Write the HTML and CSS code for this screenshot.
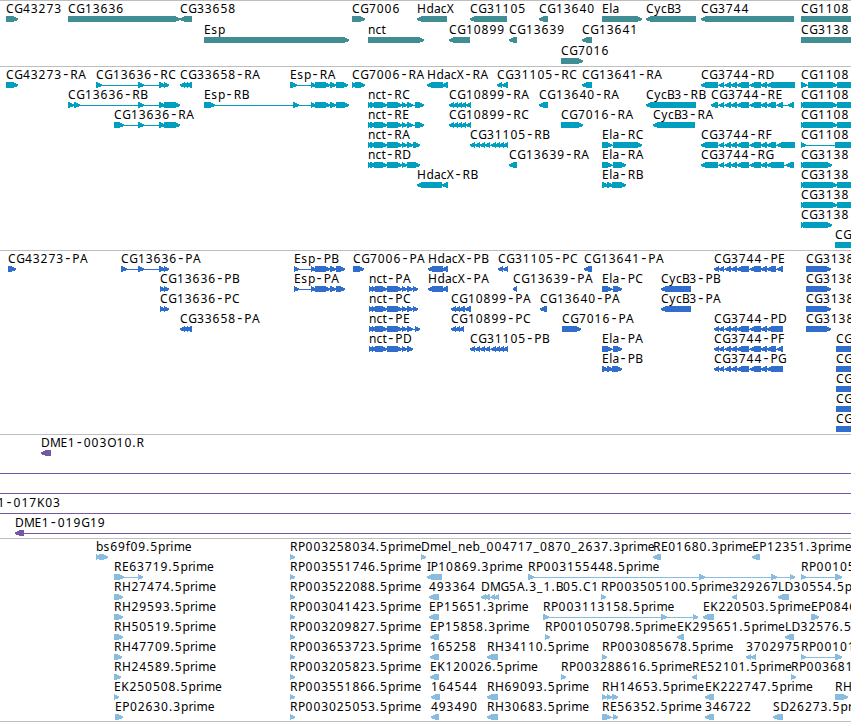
FILE: index.html
```html
<!DOCTYPE html>
<html lang="en">
<head>
  <meta charset="UTF-8" />
  <meta name="viewport" content="width=device-width, initial-scale=1.0"/>
  <title>Genome browser</title>
  <link rel="stylesheet" href="styles.css">
</head>
<body>

<main class="browser">
  <svg id="genes" class="track track-genes"></svg>
  <svg id="transcripts" class="track track-transcripts"></svg>
  <svg id="proteins" class="track track-proteins"></svg>
  <svg id="clones" class="track track-clones"></svg>
  <svg id="ests" class="track track-ests"></svg>
</main>

<script src="tracks.js"></script>
</body>
</html>
```
FILE: styles.css
```css
html, body {
  margin: 0;
  padding: 0;
  overflow: hidden;
  background: #fff;
}
.browser {
  display: flex;
  flex-direction: column;
  height: 721px;
  border-bottom: 1px solid #bebebe;
}
.track {
  display: block;
  flex: none;
  box-sizing: border-box;
  width: 100%;
  border-top: 1px solid #bebebe;
  overflow: hidden;
}
.track-genes {
  height: 66px;
  color: #408d93;
}
.track-transcripts {
  height: 184px;
  color: #009ebf;
}
.track-proteins {
  height: 184px;
  color: #316dcd;
}
.track-clones {
  height: 104px;
  color: #7457a5;
}
.track-ests {
  height: 183px;
  color: #88bddf;
}
.label {
  font-family: "Noto Sans", "Open Sans", sans-serif;
  font-size: 12px;
  fill: #000;
}
.dash {
  font-family: "DejaVu Sans", sans-serif;
  font-size: 14px;
}
.exon, .intron {
  fill: currentColor;
  shape-rendering: crispEdges;
}
```
FILE: tracks.js
```javascript
const SVG = 'http://www.w3.org/2000/svg';

// horizontal advance of each character in a label
const advance = {
  A: 8, B: 7.4, C: 8.3, D: 9, E: 7.3, F: 7, G: 8.7, H: 9.5, I: 3.7, K: 8.2, L: 6.6,
  M: 10.4, O: 9.4, P: 7.6, R: 8, S: 7.3, X: 7.6, '-': 8.3, '.': 4.3, _: 6.6,
  a: 6.8, b: 7.6, c: 6, d: 7.4, e: 7, f: 4.6, i: 3.4, l: 3.3, m: 11.1, n: 7.4,
  p: 7.5, r: 4.7, s: 6.6, t: 4.6, y: 6.6
};

// exon groups shared by several isoforms
const nct = '368-371 370-376 374-387 387-402 402-407 407-413';
const nctP = '369-373 372-376 375-387 387-402 402-407 407-413';
const esp = '311-316 315-330 330-336';
const cg3744 = '719-724 725-731 731-737 737-749 750-761 761-767';
const cg10899 = '449-454 453-458 457-462 461-466 466-471';
const cg31105 = '470-475 475-480 480-485 485-490 491-496 495-500 499-504 503-508';
const cg33658 = '180-185 183-188 186-192';

// each row: label | direction | exons | optional label position
const tracks = {
  genes: [
    ['CG43273|>|6-18', 'CG13636|>|68-180', 'CG33658|<|180-192', 'CG7006|>|352-365', 'HdacX|<|417-447',
     'CG31105|<|470-507', 'CG13640|<|539-548', 'Ela|>|602-642', 'CycB3|<|646-696', 'CG3744|<|701-794', 'CG1108|>|801-860'],
    ['Esp|>|204-349', 'nct|>|368-424', 'CG10899|<|449-470', 'CG13639|<|509-517', 'CG13641|<|582-592', 'CG3138|>|801-860'],
    ['CG7016|>|561-583']
  ],
  transcripts: [
    ['CG43273-RA|>|6-18', 'CG13636-RC|>|96-102 138-144 159-165 164-169', `CG33658-RA|<|${cg33658}`,
     `Esp-RA|>|290-297 ${esp} 336-348`, 'CG7006-RA|>|352-356 355-365', 'HdacX-RA|<|427-443 442-448',
     'CG31105-RC|<|497-502 502-508', 'CG13641-RA|<|582-592', `CG3744-RD|<|701-718 ${cg3744} 767-795`, 'CG1108|>|801-807 808-837 837-860'],
    ['CG13636-RB|>|68-74 74-80 138-144 159-165 164-180', `Esp-RB|>|204-215 293-299 ${esp} 336-349`, `nct-RC|>|${nct} 415-424`,
     `CG10899-RA|<|${cg10899}`, 'CG13640-RA|<|539-548', 'CycB3-RB|<|646-696',
     `CG3744-RE|<|711-718 ${cg3744} 767-776 777-783 788-794`, 'CG1108|>|801-804 803-837 837-860'],
    ['CG13636-RA|>|114-124 138-144 159-165 164-180', `nct-RE|>|${nct} 415-424`, `CG10899-RC|<|${cg10899}`,
     'CG7016-RA|>|561-583', 'CycB3-RA|<|653-695', 'CG1108|>|801-804 803-837 837-860'],
    [`nct-RA|>|${nct} 413-420`, `CG31105-RB|<|${cg31105}`, 'Ela-RC|>|602-612 613-642',
     `CG3744-RF|<|701-718 ${cg3744} 767-776 777-795`, 'CG1108|>|801-806 835-860'],
    [`nct-RD|>|${nct} 407-420`, 'CG13639-RA|<|509-517', 'Ela-RA|>|602-612 613-626',
     `CG3744-RG|<|701-718 ${cg3744} 767-784 786-794`, 'CG3138|>|801-804 803-832'],
    ['HdacX-RB|<|417-442 442-448', 'Ela-RB|>|602-608 607-613 612-626', 'CG3138|>|801-804 803-837 837-860'],
    ['CG3138|>|801-804 803-837 837-860'],
    ['CG3138|>|801-804 803-832'],
    ['CG|>|835-860']
  ],
  proteins: [
    ['CG43273-PA|>|8-16', 'CG13636-PA|>|121-127 138-144 159-165 164-169', `Esp-PB|>|294-299 ${esp} 336-345`,
     'CG7006-PA|>|353-364', 'HdacX-PB|<|428-443 442-448', 'CG31105-PC|<|498-503 503-508', 'CG13641-PA|<|584-592',
     `CG3744-PE|<|714-719 ${cg3744} 767-776 777-783`, 'CG3138|>|806-831'],
    ['CG13636-PB|>|160-165 164-169', `Esp-PA|>|294-299 ${esp} 336-345`, `nct-PA|>|${nctP} 413-418`,
     'HdacX-PA|<|428-443 442-448', 'CG13639-PA|<|513-517', 'Ela-PC|>|602-612 613-622', 'CycB3-PB|<|661-691', 'CG3138|>|806-831'],
    ['CG13636-PC|>|160-165 164-169', `nct-PC|>|${nctP} 413-418`, 'CG10899-PA|<|451-456 455-460 459-465 465-471',
     'CG13640-PA|<|540-547', 'CycB3-PA|<|661-691', 'CG3138|>|806-831'],
    [`CG33658-PA|<|${cg33658}`, `nct-PE|>|${nctP} 415-420`, 'CG10899-PC|<|451-456 455-460 459-464',
     'CG7016-PA|>|562-581', `CG3744-PD|<|714-719 ${cg3744} 767-783`, 'CG3138|>|806-831'],
    [`nct-PD|>|${nctP} 407-412`, `CG31105-PB|<|${cg31105}`, 'Ela-PA|>|602-612 613-622',
     `CG3744-PF|<|714-719 ${cg3744} 767-776 777-783`, 'CG|>|836-860'],
    ['Ela-PB|>|602-608 607-613 612-622', `CG3744-PG|<|714-719 ${cg3744} 767-783`, 'CG|>|836-860'],
    ['CG|>|836-860'],
    ['CG|>|836-860'],
    ['CG|>|836-860']
  ],
  clones: [
    ['DME1-003O10.R|<|41-51'],
    ['|<|-20--10 860-870'],
    ['|<|-20--10 860-870'],
    ['1-017K03|<|-20--10 860-870|-2.5'],
    ['DME1-019G19|<|15-24 860-870']
  ],
  ests: [
    ['bs69f09.5prime|>|96-100 99-108', 'RP003258034.5prime|>|290-295', 'Dmel_neb_004717_0870_2637.3prime|>|421-426',
     'RE01680.3prime|<|653-661', 'EP12351.3prime|<|752-760'],
    ['RE63719.5prime|>|114-124 138-143', 'RP003551746.5prime|>|290-295', 'IP10869.3prime|<|427-442',
     'RP003155448.5prime|>|528-534 699-705 771-777 790-795', 'RP00105|>|801-806 835-842'],
    ['RH27474.5prime|>|114-123', 'RP003522088.5prime|>|290-295', '493364|<|429-439', 'DMG5A.3_1.B05.C1|<|481-486 484-490 491-495 494-499',
     'RP003505100.5prime|>|601-606', '329267|<|732-737', 'LD30554.5prime|<|778-789'],
    ['RH29593.5prime|>|114-123', 'RP003041423.5prime|>|290-295', 'EP15651.3prime|<|429-439',
     'RP003113158.5prime|>|543-549 661-667 693-698', 'EK220503.5prime|<|703-714', 'EP0846|>|811-819'],
    ['RH50519.5prime|>|114-123', 'RP003209827.5prime|>|290-295', 'EP15858.3prime|<|430-439',
     'RP001050798.5prime|>|545-550', 'EK295651.5prime|<|677-684', 'LD32576.5prime|<|785-794'],
    ['RH47709.5prime|>|114-122', 'RP003653723.5prime|>|290-295', '165258|<|430-439', 'RH34110.5prime|<|487-498',
     'RP003085678.5prime|>|602-607', '3702975|<|746-751 751-756', 'RP00101|>|801-806 835-842'],
    ['RH24589.5prime|>|114-121', 'RP003205823.5prime|>|290-295', 'EK120026.5prime|<|430-439',
     'RP003288616.5prime|>|561-566', 'RE52101.5prime|<|692-697', 'RP003681|>|791-796'],
    ['EK250508.5prime|>|114-119', 'RP003551866.5prime|>|290-295', '164544|<|431-440', 'RH69093.5prime|<|487-498',
     'RH14653.5prime|>|602-607 607-612 612-618', 'EK222747.5prime|<|705-714', 'RH|>|835-848'],
    ['EP02630.3prime|>|115-123', 'RP003025053.5prime|>|290-295', '493490|<|431-439', 'RH30683.5prime|<|487-498',
     'RE56352.5prime|>|602-611 613-618', '346722|<|705-714', 'SD26273.5prime|<|773-783']
  ]
};

function add(parent, tag, attrs) {
  const el = document.createElementNS(SVG, tag);
  for (const key in attrs) el.setAttribute(key, attrs[key]);
  parent.appendChild(el);
  return el;
}

function drawLabel(svg, label, x, y) {
  const text = add(svg, 'text', { class: 'label', y: y });
  // the dash is set wider than the label font's own
  for (const part of label.split(/(-)/)) {
    if (!part) continue;
    const xs = [];
    for (const ch of part) {
      xs.push((ch === '-' ? x + 1.2 : x).toFixed(1));
      x += advance[ch] || 7.8;
    }
    const attrs = { x: xs.join(' ') };
    if (part === '-') attrs.class = 'dash';
    add(text, 'tspan', attrs).textContent = part;
  }
}

function drawExon(svg, a, b, dir, y) {
  const head = Math.min(b - a, 5);
  const tip = dir === '>' ? b : a;
  const tail = dir === '>' ? a : b;
  const neck = dir === '>' ? b - head : a + head;
  add(svg, 'polygon', {
    class: 'exon',
    points: `${tail},${y} ${neck},${y} ${tip},${y + 2.4} ${tip},${y + 4} ${neck},${y + 6} ${tail},${y + 6}`
  });
}

function drawFeature(svg, feature, top) {
  const [label, dir, exonText, labelX] = feature.split('|');
  const exons = exonText.split(' ').map(s => s.match(/^(-?\d+)-(-?\d+)$/).slice(1).map(Number));
  const start = exons[0][0];
  const end = exons[exons.length - 1][1];

  if (exons.length > 1) {
    add(svg, 'rect', { class: 'intron', x: start, y: top + 3, width: end - start, height: 1 });
  }
  exons.forEach(([a, b]) => drawExon(svg, a, b, dir, top));
  if (label) drawLabel(svg, label, labelX ? Number(labelX) : start, top - 3);
}

for (const id in tracks) {
  const svg = document.getElementById(id);
  const pitch = id === 'genes' ? 21 : 20;
  tracks[id].forEach((row, i) => {
    row.forEach(feature => drawFeature(svg, feature, 15 + i * pitch));
  });
}
```
